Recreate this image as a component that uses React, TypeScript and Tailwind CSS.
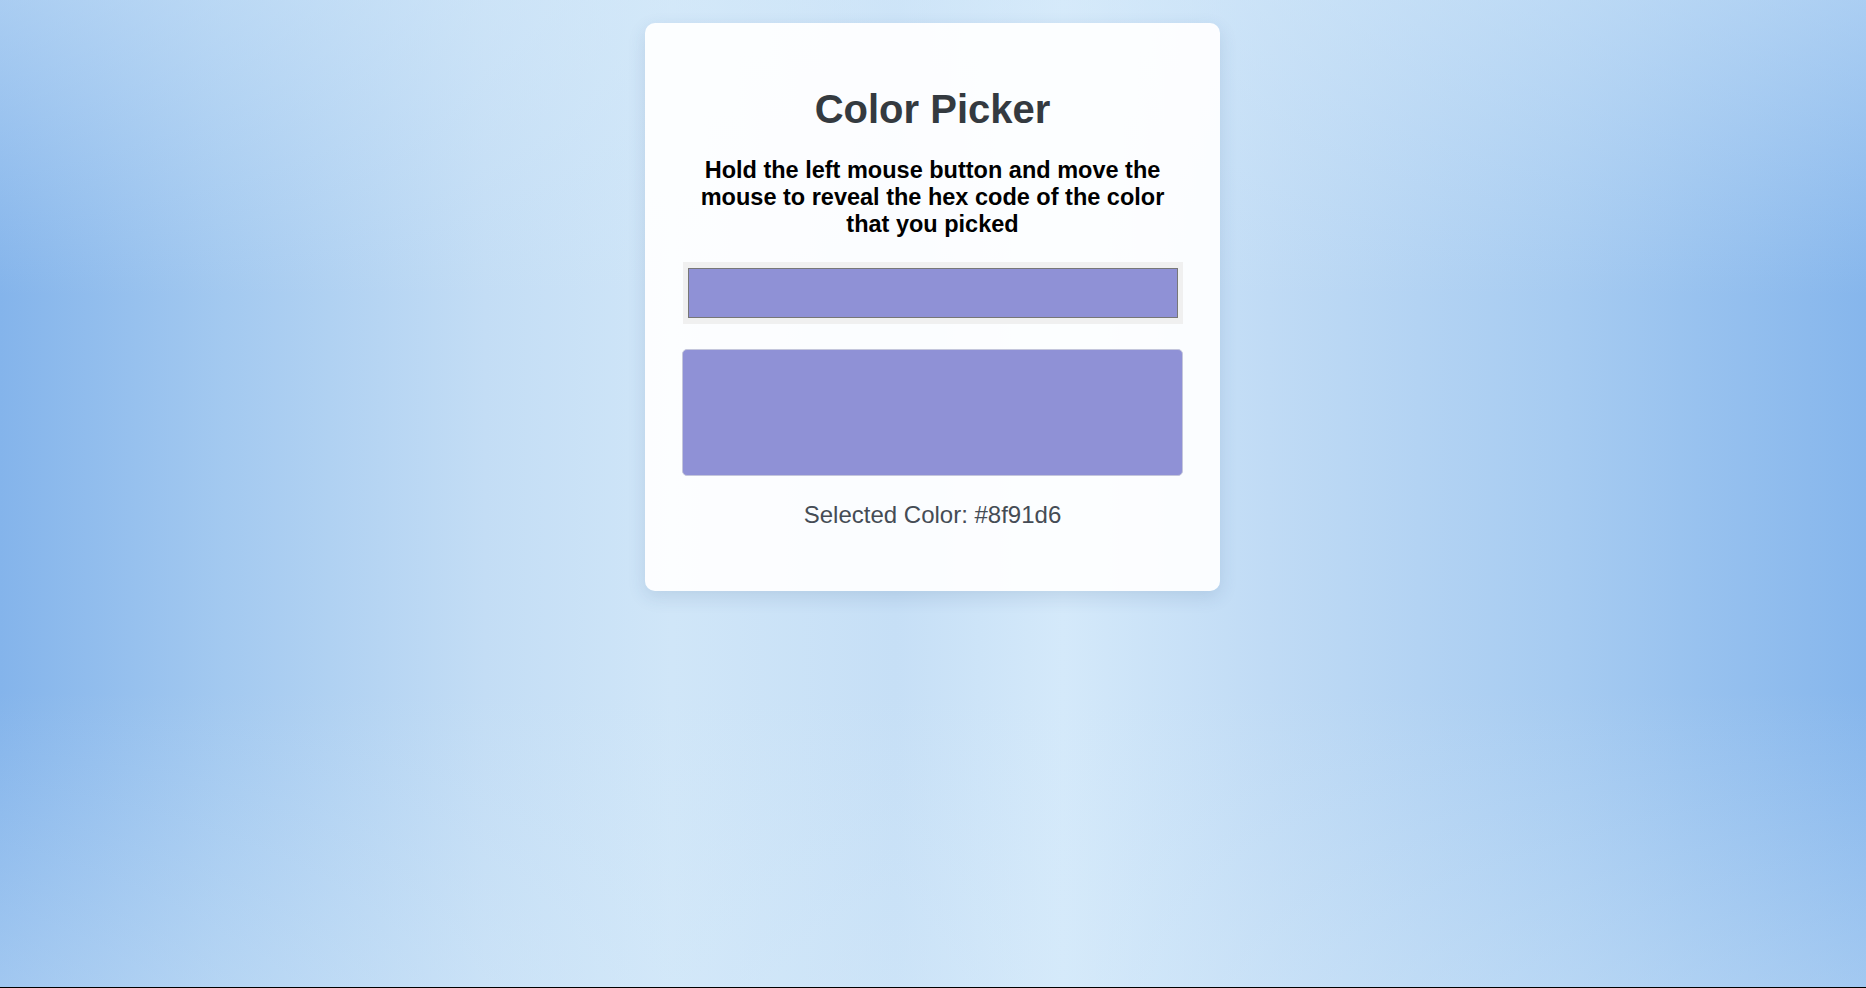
import React from "react";

export default function App() {
  const color = "#8f91d6";
  return (
    <div
      className="w-full h-[988px] flex flex-col"
      style={{ fontFamily: '"Liberation Sans", Arial, sans-serif' }}
    >
      <div className="relative flex-1 flex justify-center items-start pt-[23px] bg-[linear-gradient(90deg,#84b4eb_0%,#a3c9f0_12%,#c3ddf5_26%,#d0e6f8_36%,#c6dff6_48%,#d4e9fa_57%,#c0dbf5_68%,#a6cbf1_84%,#86b6ec_100%)]">
        <div className="absolute inset-0 bg-[linear-gradient(180deg,rgba(215,235,250,0.45)_0%,rgba(215,235,250,0)_30%,rgba(215,235,250,0)_70%,rgba(215,235,250,0.35)_100%)] pointer-events-none" />
        <div className="relative mr-[1px] w-[575px] h-[568px] rounded-[10px] bg-[rgba(255,255,255,0.93)] shadow-[0_6px_18px_rgba(40,80,130,0.14)] flex flex-col items-center pt-[63px]">
          <h1 className="text-[40px] leading-[46px] font-bold text-[#343a40] text-center">
            Color Picker
          </h1>
          <p className="mt-[25px] w-[500px] text-[23.5px] leading-[27px] font-bold text-black text-center">
            Hold the left mouse button and move the mouse to reveal the hex code of the color that you picked
          </p>
          <div className="mt-[24px] w-[500px] h-[62px] bg-[#f0f0f0] pt-[6px] pb-[6px] px-[5px]">
            <div
              className="w-full h-full border border-[#777777]"
              style={{ backgroundColor: color }}
            />
          </div>
          <div
            className="mt-[25px] w-[501px] h-[127px] rounded-[5px] border border-[#c4c6dc]"
            style={{ backgroundColor: color }}
          />
          <div className="mt-[25px] text-[24px] leading-[28px] text-[#454c55] text-center">
            Selected Color: {color}
          </div>
        </div>
      </div>
      <div className="h-[1px] bg-black" />
    </div>
  );
}
